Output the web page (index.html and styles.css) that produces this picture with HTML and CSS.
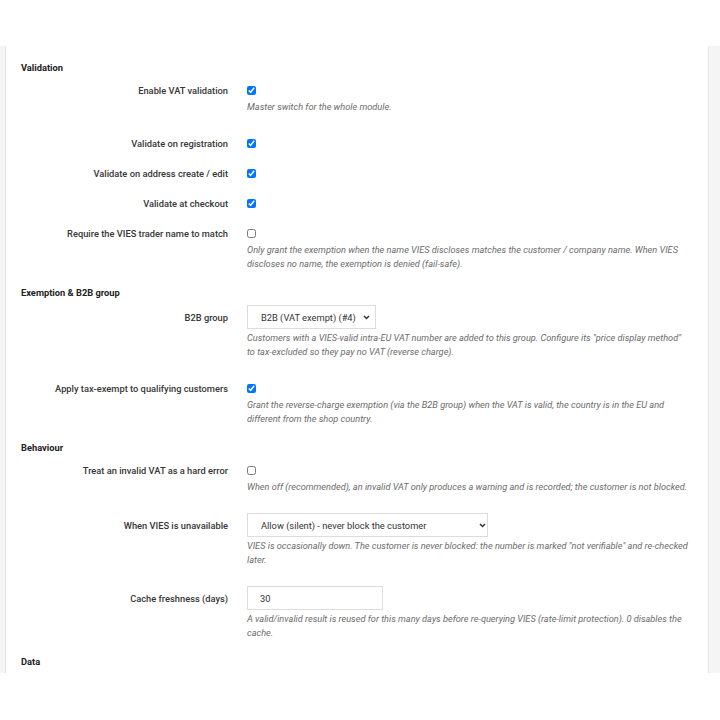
FILE: index.html
```html
<!DOCTYPE html>
<html>
<head>
    <meta charset="UTF-8">
    <title>VAT validation settings</title>
    <link rel="stylesheet" href="styles.css">
</head>
<body>
    <div class="page">
        <div class="panel">
            <div class="section">
                <h3 class="section-title">Validation</h3>

                <div class="form-row">
                    <label class="form-label" for="enabled">Enable VAT validation</label>
                    <div class="form-field">
                        <div class="field-line"><input type="checkbox" id="enabled" checked></div>
                        <p class="help">Master switch for the whole module.</p>
                    </div>
                </div>

                <div class="form-row">
                    <label class="form-label" for="on_register">Validate on registration</label>
                    <div class="form-field">
                        <div class="field-line"><input type="checkbox" id="on_register" checked></div>
                    </div>
                </div>

                <div class="form-row">
                    <label class="form-label" for="on_address">Validate on address create / edit</label>
                    <div class="form-field">
                        <div class="field-line"><input type="checkbox" id="on_address" checked></div>
                    </div>
                </div>

                <div class="form-row">
                    <label class="form-label" for="on_checkout">Validate at checkout</label>
                    <div class="form-field">
                        <div class="field-line"><input type="checkbox" id="on_checkout" checked></div>
                    </div>
                </div>

                <div class="form-row">
                    <label class="form-label" for="name_match">Require the VIES trader name to match</label>
                    <div class="form-field">
                        <div class="field-line"><input type="checkbox" id="name_match"></div>
                        <p class="help">Only grant the exemption when the name VIES discloses matches the customer / company name. When VIES discloses no name, the exemption is denied (fail-safe).</p>
                    </div>
                </div>
            </div>

            <div class="section">
                <h3 class="section-title">Exemption &amp; B2B group</h3>

                <div class="form-row form-row--input">
                    <label class="form-label" for="b2b_group">B2B group</label>
                    <div class="form-field">
                        <div class="field-line">
                            <span class="select-wrap select-sm">
                                <select id="b2b_group">
                                    <option>B2B (VAT exempt) (#4)</option>
                                    <option>Customer (#3)</option>
                                </select>
                                <svg class="chevron" width="7" height="5" viewBox="0 0 7 5"><path d="M1 1l2.5 2.5L6 1" fill="none" stroke="#333" stroke-width="1.5"/></svg>
                            </span>
                        </div>
                        <p class="help">Customers with a VIES-valid intra-EU VAT number are added to this group. Configure its "price display method" to tax-excluded so they pay no VAT (reverse charge).</p>
                    </div>
                </div>

                <div class="form-row">
                    <label class="form-label" for="tax_exempt">Apply tax-exempt to qualifying customers</label>
                    <div class="form-field">
                        <div class="field-line"><input type="checkbox" id="tax_exempt" checked></div>
                        <p class="help">Grant the reverse-charge exemption (via the B2B group) when the VAT is valid, the country is in the EU and different from the shop country.</p>
                    </div>
                </div>
            </div>

            <div class="section">
                <h3 class="section-title">Behaviour</h3>

                <div class="form-row">
                    <label class="form-label" for="hard_error">Treat an invalid VAT as a hard error</label>
                    <div class="form-field">
                        <div class="field-line"><input type="checkbox" id="hard_error"></div>
                        <p class="help">When off (recommended), an invalid VAT only produces a warning and is recorded; the customer is not blocked.</p>
                    </div>
                </div>

                <div class="form-row form-row--input">
                    <label class="form-label" for="unavailable">When VIES is unavailable</label>
                    <div class="form-field">
                        <div class="field-line">
                            <span class="select-wrap select-lg">
                                <select id="unavailable">
                                    <option>Allow (silent) - never block the customer</option>
                                    <option>Allow with a warning</option>
                                    <option>Block the customer</option>
                                </select>
                                <svg class="chevron" width="7" height="5" viewBox="0 0 7 5"><path d="M1 1l2.5 2.5L6 1" fill="none" stroke="#333" stroke-width="1.5"/></svg>
                            </span>
                        </div>
                        <p class="help">VIES is occasionally down. The customer is never blocked: the number is marked "not verifiable" and re-checked later.</p>
                    </div>
                </div>

                <div class="form-row form-row--input">
                    <label class="form-label" for="cache_days">Cache freshness (days)</label>
                    <div class="form-field">
                        <div class="field-line"><input type="text" id="cache_days" class="input-sm" value="30"></div>
                        <p class="help">A valid/invalid result is reused for this many days before re-querying VIES (rate-limit protection). 0 disables the cache.</p>
                    </div>
                </div>
            </div>

            <div class="section">
                <h3 class="section-title">Data</h3>
            </div>
        </div>
    </div>
</body>
</html>
```

FILE: styles.css
```css
body {
    margin: 0;
    background: #fff;
    font-family: Roboto, "Liberation Sans", sans-serif;
    font-size: 9.3px;
    color: #363636;
}
.page {
    margin-top: 46px;
    height: 627px;
    overflow: hidden;
    background: #f5f5f5;
    padding: 0 11px 0 5px;
}
.panel {
    background: #fff;
    border-left: 1px solid #e4e4e4;
    border-right: 1px solid #e4e4e4;
    height: 100%;
    padding: 15px 18px 0 15px;
    box-sizing: border-box;
}
.section {
    margin-bottom: 8px;
}
.section-title {
    margin: 0 0 7px 0;
    font-size: 9.3px;
    line-height: 14px;
    font-weight: 700;
    color: #222;
}
.form-row {
    display: grid;
    grid-template-columns: 207px 1fr;
    column-gap: 19px;
    margin-bottom: 14px;
}
.section .form-row:last-child {
    margin-bottom: 0;
}
.form-label {
    display: flex;
    align-items: center;
    justify-content: flex-end;
    height: 16px;
    font-weight: 500;
    color: #363636;
    text-align: right;
}
.field-line {
    display: flex;
    align-items: center;
    height: 16px;
}
.form-row--input .form-label,
.form-row--input .field-line {
    height: 24px;
    margin-top: -2px;
}
input[type="checkbox"] {
    width: 9px;
    height: 9px;
    margin: 0;
}
.help {
    margin: 2px 0 7px 0;
    font-style: italic;
    font-size: 9.2px;
    line-height: 14px;
    color: #6b6b6b;
}
.select-wrap {
    position: relative;
    display: inline-block;
}
.select-wrap select {
    width: 100%;
}
.chevron {
    position: absolute;
    top: 10px;
    right: 6px;
    pointer-events: none;
}
.select-lg .chevron {
    right: 2px;
}
select, .input-sm {
    height: 24px;
    border: 1px solid #dcdcdc;
    border-radius: 0;
    background: #fff;
    font-family: Roboto, "Liberation Sans", sans-serif;
    font-size: 9.3px;
    color: #333;
    box-sizing: border-box;
    outline: none;
}
select {
    appearance: none;
    padding: 0 16px 0 13px;
}
.select-sm {
    width: 129px;
}
.select-lg {
    width: 241px;
}
.input-sm {
    width: 136px;
    padding: 0 12px;
}
```
